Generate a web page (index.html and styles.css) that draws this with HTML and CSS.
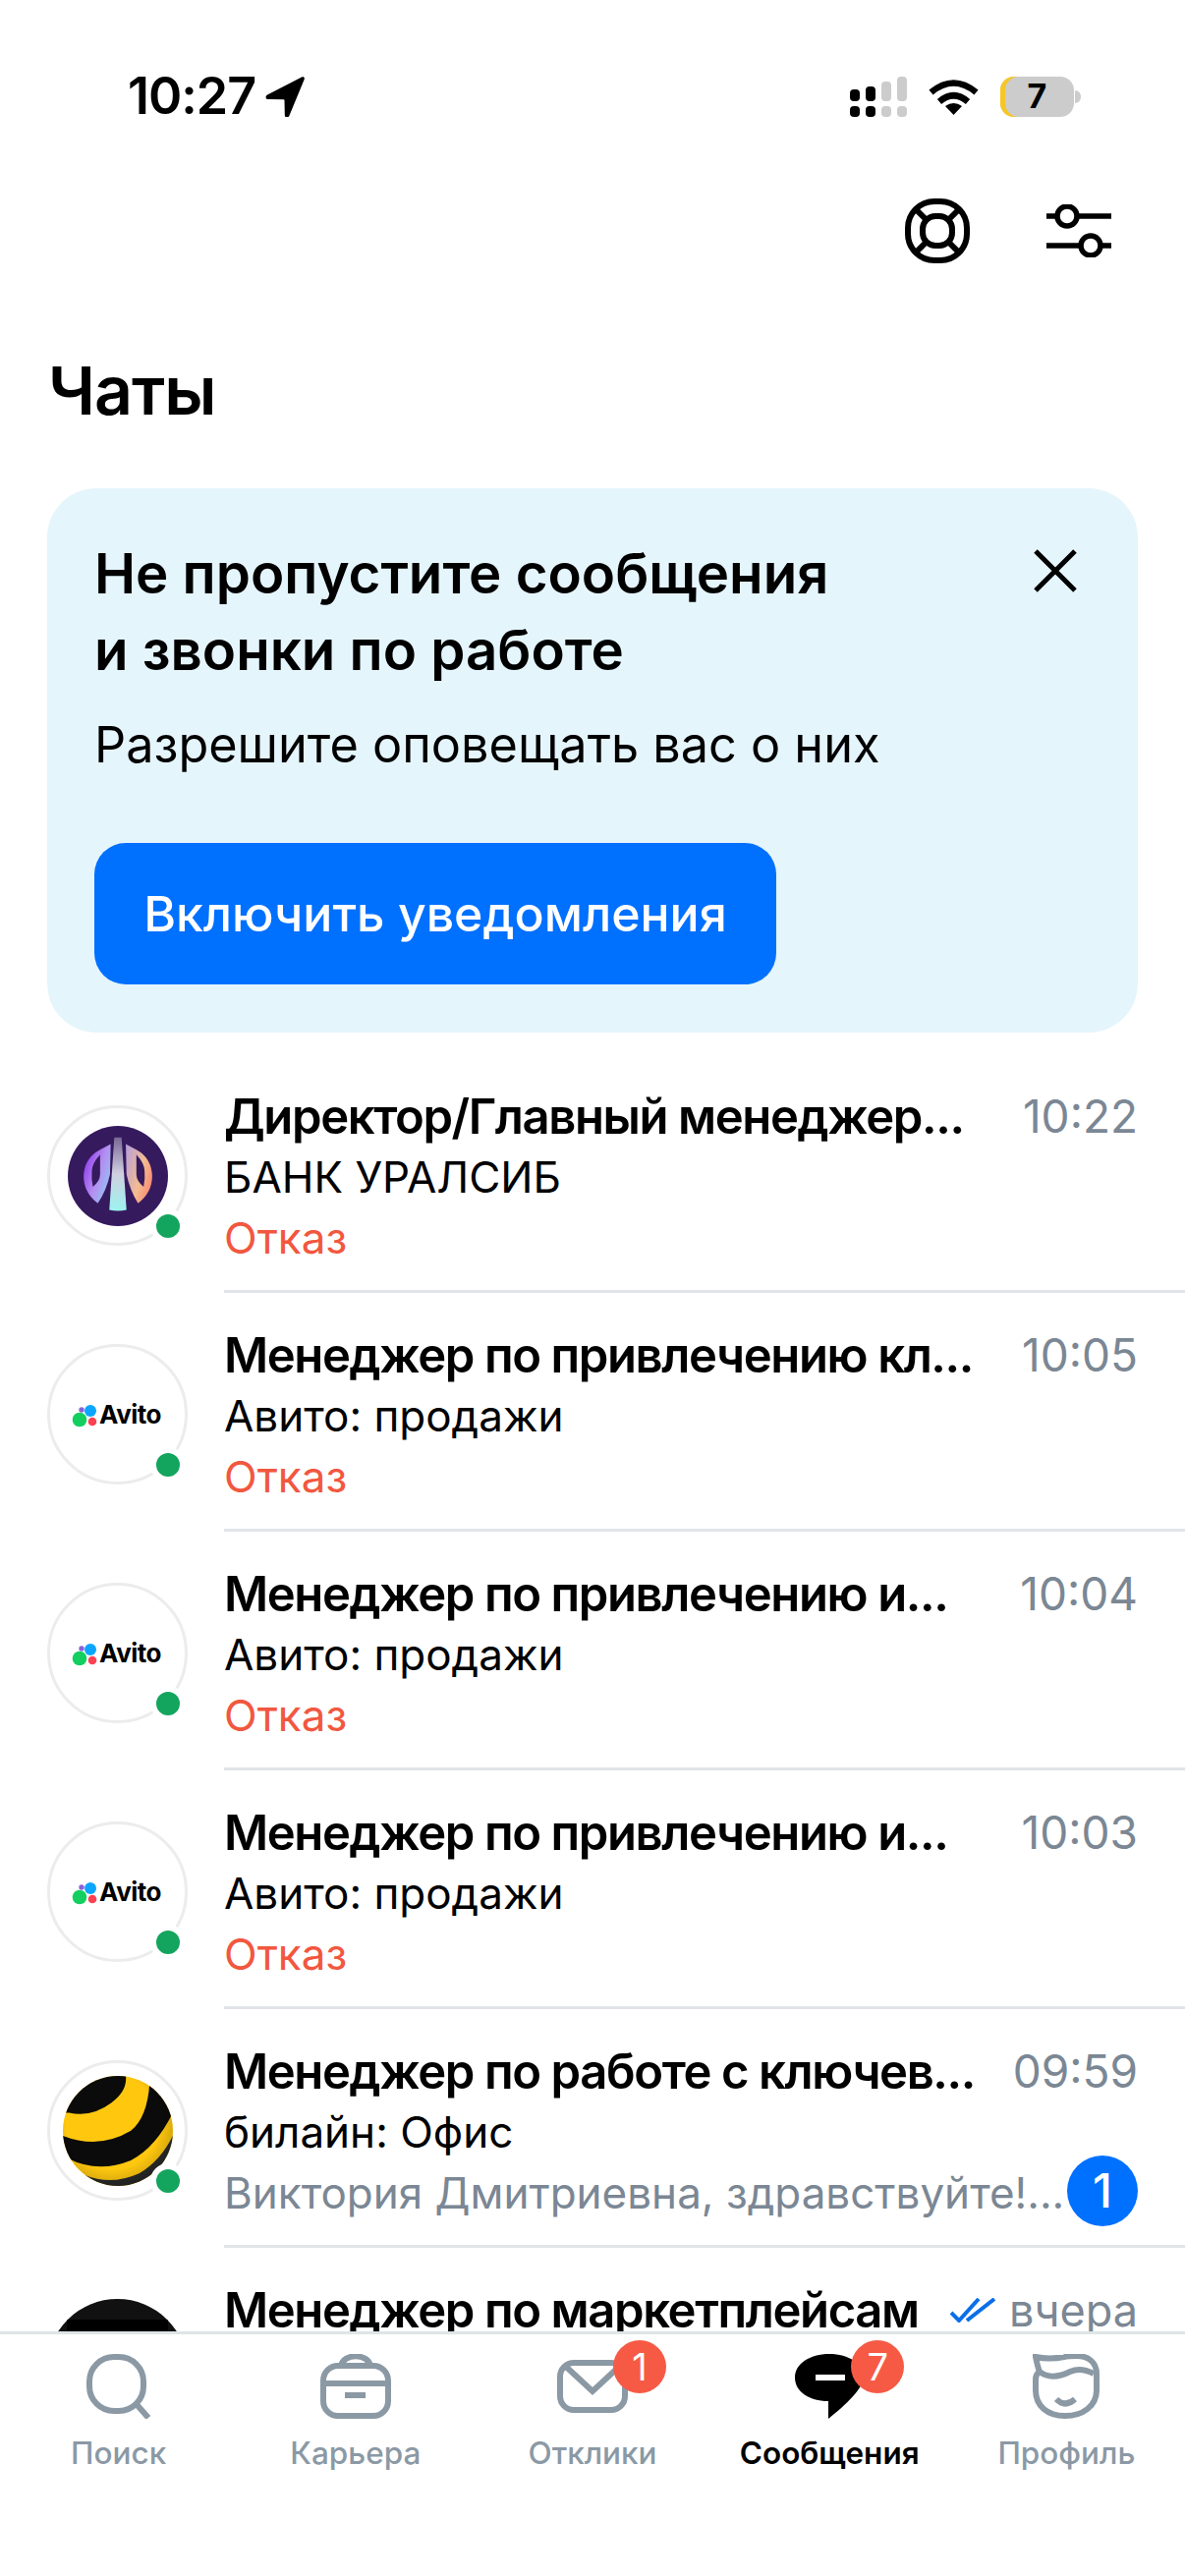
FILE: index.html
```html
<!DOCTYPE html>
<html lang="ru">
<head>
<meta charset="utf-8">
<title>Чаты</title>
<link rel="stylesheet" href="styles.css">
</head>
<body>
<div class="screen">
  <header class="status">
    <div class="status-left">
      <span class="clock">10:27</span>
      <svg class="arrow" viewBox="0 0 40 41"><path d="M37 .6 2.600 18.200C-.6 19.800.2 23 3 23l15.600.2c.6 0 .9.3.9.9l.3 14.900c0 3 3.200 3.400 4.500.9L39.500 3.200C40.500 1 39.200-.4 37 .6Z"/></svg>
    </div>
    <div class="status-right">
      <svg class="signal" viewBox="0 0 58 41">
        <g class="sig-on"><rect x="0" y="13" width="10" height="12" rx="4"/><rect x="16" y="10" width="10" height="15" rx="4"/><rect x="0" y="30" width="10" height="11" rx="4"/><rect x="16" y="30" width="10" height="11" rx="4"/></g>
        <g class="sig-off"><rect x="32" y="5" width="10" height="20" rx="4"/><rect x="48" y="0" width="10" height="25" rx="4"/><rect x="32" y="30" width="10" height="11" rx="4"/><rect x="48" y="30" width="10" height="11" rx="4"/></g>
      </svg>
      <svg class="wifi" viewBox="0 0 51 37"><path class="wifi-arc" d="M2.500 14Q25.500-5 48.500 14"/><path class="wifi-arc" d="M11 23.500Q25.500 11 40 23.500"/><path d="M17 28Q25.500 22 34 28L25.500 37Z"/></svg>
      <div class="battery"><span class="battery-num">7</span></div>
    </div>
  </header>

  <div class="actions">
    <svg class="act-help" viewBox="0 0 66 66"><rect x="3" y="3" width="60" height="60" rx="27"/><rect x="18" y="18" width="30" height="30" rx="13"/><path d="M12 12 22 22M54 12 44 22M12 54 22 44M54 54 44 44"/></svg>
    <svg class="act-filter" viewBox="0 0 66 54"><path d="M0 12H10M32 12H66M0 42H34M56 42H66"/><circle cx="21" cy="12" r="10"/><circle cx="45" cy="42" r="10"/></svg>
  </div>

  <h1 class="page-title">Чаты</h1>

  <section class="promo">
    <svg class="promo-close" viewBox="0 0 46 46"><path d="M3 3 43 43M43 3 3 43"/></svg>
    <h2 class="promo-title">Не пропустите сообщения<br>и звонки по работе</h2>
    <p class="promo-text">Разрешите оповещать вас о них</p>
    <button class="promo-btn">Включить уведомления</button>
  </section>

  <main class="list">
    <article class="row">
      <div class="avatar">
        <svg class="logo-bank" viewBox="208 198 304 304">
          <defs>
            <linearGradient id="ua" x1="0" y1=".2" x2="1" y2=".9"><stop offset="0" stop-color="#8e35ee"/><stop offset=".5" stop-color="#b48df0"/><stop offset="1" stop-color="#8ccff5"/></linearGradient>
            <linearGradient id="ub" x1="0" y1="0" x2="0" y2="1"><stop offset="0" stop-color="#7a6896"/><stop offset=".5" stop-color="#d0d0e0"/><stop offset="1" stop-color="#9cf4f0"/></linearGradient>
            <linearGradient id="uc" x1="0" y1=".1" x2="1" y2=".7"><stop offset="0" stop-color="#b8a0d8"/><stop offset=".6" stop-color="#f3bc92"/><stop offset="1" stop-color="#f88a70"/></linearGradient>
          </defs>
          <circle cx="360" cy="350" r="152" fill="#361a5e"/>
          <path fill="url(#ub)" d="M349 233H371L386 453Q360 458 334 453Z"/>
          <path fill="url(#ua)" fill-rule="evenodd" d="M338 253 336 345Q325 395 299 433Q256 400 256 350Q258 295 306 270ZM306 285Q281 312 281 335Q279 360 284 383Q306 365 306 345Z"/>
          <path fill="url(#uc)" fill-rule="evenodd" d="M384 253 386 345Q397 395 421 433Q464 400 464 350Q462 295 416 270ZM416 285Q441 312 441 335Q443 360 438 383Q416 365 416 345Z"/>
        </svg>
        <span class="online"></span>
      </div>
      <div class="body">
        <div class="line"><span class="name">Директор/Главный менеджер...</span><span class="time">10:22</span></div>
        <div class="company">БАНК УРАЛСИБ</div>
        <div class="state">Отказ</div>
      </div>
    </article>

    <article class="row">
      <div class="avatar">
        <div class="logo-avito"><svg class="avito-dots" viewBox="0 0 27 26"><circle cx="8" cy="18" r="7.300"/><circle class="d-blue" cx="19" cy="9" r="6"/><circle class="d-red" cx="21" cy="20" r="4.300"/><circle class="d-purple" cx="10" cy="8" r="2.700"/></svg><span class="avito-text">Avito</span></div>
        <span class="online"></span>
      </div>
      <div class="body">
        <div class="line"><span class="name">Менеджер по привлечению кл...</span><span class="time">10:05</span></div>
        <div class="company">Авито: продажи</div>
        <div class="state">Отказ</div>
      </div>
    </article>

    <article class="row">
      <div class="avatar">
        <div class="logo-avito"><svg class="avito-dots" viewBox="0 0 27 26"><circle cx="8" cy="18" r="7.300"/><circle class="d-blue" cx="19" cy="9" r="6"/><circle class="d-red" cx="21" cy="20" r="4.300"/><circle class="d-purple" cx="10" cy="8" r="2.700"/></svg><span class="avito-text">Avito</span></div>
        <span class="online"></span>
      </div>
      <div class="body">
        <div class="line"><span class="name">Менеджер по привлечению и...</span><span class="time">10:04</span></div>
        <div class="company">Авито: продажи</div>
        <div class="state">Отказ</div>
      </div>
    </article>

    <article class="row">
      <div class="avatar">
        <div class="logo-avito"><svg class="avito-dots" viewBox="0 0 27 26"><circle cx="8" cy="18" r="7.300"/><circle class="d-blue" cx="19" cy="9" r="6"/><circle class="d-red" cx="21" cy="20" r="4.300"/><circle class="d-purple" cx="10" cy="8" r="2.700"/></svg><span class="avito-text">Avito</span></div>
        <span class="online"></span>
      </div>
      <div class="body">
        <div class="line"><span class="name">Менеджер по привлечению и...</span><span class="time">10:03</span></div>
        <div class="company">Авито: продажи</div>
        <div class="state">Отказ</div>
      </div>
    </article>

    <article class="row">
      <div class="avatar">
        <svg class="logo-bee" viewBox="193 213 335 335">
          <defs>
            <clipPath id="ball"><circle cx="360.500" cy="380.500" r="167.500"/></clipPath>
            <radialGradient id="shade" cx=".45" cy=".42" r=".6"><stop offset=".7" stop-color="#000" stop-opacity="0"/><stop offset="1" stop-color="#000" stop-opacity=".2"/></radialGradient>
          </defs>
          <g clip-path="url(#ball)">
            <rect x="193" y="213" width="335" height="335" fill="#ffc80f"/>
            <path fill="#0b0b0b" d="M185 325V200H385V222Q385 262 340 295Q280 340 212 325Z"/>
            <path fill="#0b0b0b" d="M185 392Q300 440 400 380Q450 340 457 235L535 310Q480 430 400 470Q300 510 210 465L185 420Z"/>
            <path fill="#2a2a2a" d="M260 515Q340 548 425 510Q495 470 535 380V560H260Z"/>
            <circle cx="360.500" cy="380.500" r="167.500" fill="url(#shade)"/>
          </g>
        </svg>
        <span class="online"></span>
      </div>
      <div class="body">
        <div class="line"><span class="name">Менеджер по работе с ключев...</span><span class="time">09:59</span></div>
        <div class="company">билайн: Офис</div>
        <div class="line"><span class="preview">Виктория Дмитриевна, здравствуйте!...</span><span class="count">1</span></div>
      </div>
    </article>

    <article class="row">
      <div class="avatar avatar-black"><span class="black-square"></span></div>
      <div class="body">
        <div class="line"><span class="name">Менеджер по маркетплейсам</span><span class="meta"><svg class="ticks" viewBox="0 0 46 25"><path d="M1 15 9 23 29 1M17 23 45 1"/></svg><span class="time time-word">вчера</span></span></div>
      </div>
    </article>
  </main>

  <nav class="tabs">
    <a class="tab">
      <span class="tab-icon"><svg class="ico ico-search" viewBox="0 0 66 66"><rect x="3" y="3" width="55" height="55" rx="25"/><path d="M49 49 63 65"/></svg></span>
      <span class="tab-label">Поиск</span>
    </a>
    <a class="tab">
      <span class="tab-icon"><svg class="ico ico-case" viewBox="0 0 72 66"><path d="M21 12C24-1 48-1 51 12"/><rect x="3" y="12" width="66" height="51" rx="15"/><path d="M3 30H69"/><path d="M25 42H46"/></svg></span>
      <span class="tab-label">Карьера</span>
    </a>
    <a class="tab">
      <span class="tab-icon"><svg class="ico ico-mail" viewBox="0 0 72 66"><rect x="3" y="9" width="66" height="48" rx="14"/><path d="M8 12 36 38 64 12"/></svg><span class="tab-badge">1</span></span>
      <span class="tab-label">Отклики</span>
    </a>
    <a class="tab tab-active">
      <span class="tab-icon"><svg class="ico-chat" viewBox="0 0 70 66"><path d="M35 0C55 0 70 10 70 24 70 34 52 52 34 66L34 48C14 48 0 38 0 24 0 10 15 0 35 0Z"/><rect class="chat-dash" x="21" y="21" width="30" height="6"/></svg><span class="tab-badge">7</span></span>
      <span class="tab-label">Сообщения</span>
    </a>
    <a class="tab">
      <span class="tab-icon"><svg class="ico ico-profile" viewBox="0 0 68 66"><path d="M3 3C12 5 22 5 32 3 36 2 40 2 45 2 57 2 65 9 65 20V37C65 53 51 63 33 63 15 63 3 53 3 37V26C3 22 4 20 7 18 5 13 4 8 3 3Z"/><path d="M7 18C16 25 26 24 38 18 45 15 54 16 62 20"/><path d="M24 46Q33 55 43 46"/></svg></span>
      <span class="tab-label">Профиль</span>
    </a>
  </nav>
</div>
</body>
</html>
```
FILE: styles.css
```css
* { box-sizing: border-box; }
html, body { margin: 0; padding: 0; background: #fff; }
body { font-family: "Inter", "Liberation Sans", sans-serif; color: #000; }
.screen { width: 1206px; height: 2622px; display: flex; flex-direction: column; overflow: hidden; background: #fff; }

.status { height: 196px; flex: none; display: flex; justify-content: space-between; align-items: center; padding: 0 106px 0 130px; }
.status-left, .status-right { display: flex; align-items: center; }
.clock { font-size: 52px; font-weight: 600; line-height: 52px; letter-spacing: -1px; }
.arrow { width: 40px; height: 41px; margin-left: 10px; fill: #000; }
.signal { width: 58px; height: 41px; }
.sig-on { fill: #000; }
.sig-off { fill: #ccc; }
.wifi { width: 51px; height: 37px; margin-left: 22px; fill: #000; }
.wifi-arc { fill: none; stroke: #000; stroke-width: 6.500; }
.battery { position: relative; width: 75px; height: 41px; margin-left: 22px; margin-right: 7px; border-radius: 14px; background: #ccc; display: flex; align-items: center; justify-content: center; box-shadow: inset 5px 0 0 #f6c624; }
.battery::after { content: ""; position: absolute; right: -7px; top: 14px; width: 6px; height: 13px; border-radius: 0 6px 6px 0; background: #ccc; }
.battery-num { font-size: 34px; font-weight: 700; line-height: 1; }

.actions { height: 78px; flex: none; display: flex; justify-content: flex-end; align-items: center; gap: 78px; padding-right: 75px; }
.act-help { width: 66px; height: 66px; fill: none; stroke: #000; stroke-width: 6; }
.act-filter { width: 66px; height: 54px; fill: none; stroke: #000; stroke-width: 5.500; }

.page-title { margin: 83px 0 0 49px; font-size: 68px; font-weight: 600; line-height: 80px; letter-spacing: -1px; }

.promo { position: relative; margin: 60px 48px 0; padding: 48px 48px 49px; background: #e5f5fc; border-radius: 50px; }
.promo-close { position: absolute; top: 61px; right: 61px; width: 46px; height: 46px; fill: none; stroke: #000; stroke-width: 5; }
.promo-title { margin: 0; font-size: 56.400px; font-weight: 600; line-height: 78px; }
.promo-text { margin: 26px 0 0; font-size: 50.400px; line-height: 62px; }
.promo-btn { display: block; margin-top: 69px; width: 694px; height: 144px; border: 0; border-radius: 32px; background: #0070ff; color: #fff; font: 500 50px "Inter", "Liberation Sans", sans-serif; }

.list { flex: 1; min-height: 0; overflow: hidden; margin-top: 22px; }
.row { display: flex; height: 243px; }
.avatar { position: relative; flex: none; width: 143px; height: 143px; margin: 52px 37px 0 48px; border: 3px solid #ececec; border-radius: 50%; display: flex; align-items: center; justify-content: center; }
.online { position: absolute; left: 102px; top: 102px; width: 36px; height: 36px; border-radius: 50%; background: #13a55e; border: 6px solid #fff; }
.logo-bank { width: 102px; height: 102px; }
.logo-bee { width: 112px; height: 112px; }
.logo-avito { display: flex; align-items: center; margin-left: -2px; }
.avito-dots { width: 27px; height: 26px; fill: #12cf5f; }
.d-blue { fill: #0aa5ff; }
.d-red { fill: #ff4053; }
.d-purple { fill: #8a62d8; }
.avito-text { font-size: 26px; font-weight: 700; letter-spacing: -0.5px; line-height: 26px; margin-left: 1px; }
.avatar-black { border: 0; background: #111; align-items: flex-start; overflow: hidden; }
.black-square { width: 103px; height: 103px; margin-top: 21px; background: #000; }

.body { flex: 1; min-width: 0; padding: 32px 48px 0 0; border-bottom: 3px solid #e1e4e8; }
.line { display: flex; justify-content: space-between; align-items: center; height: 62px; white-space: nowrap; }
.name { font-size: 49px; font-weight: 600; letter-spacing: -1.400px; }
.time { font-size: 46px; color: #7b8794; }
.time-word { font-size: 45px; }
.meta { display: flex; align-items: center; gap: 14px; }
.ticks { width: 46px; height: 25px; fill: none; stroke: #0a6fe8; stroke-width: 4; }
.company { height: 62px; line-height: 62px; font-size: 44px; }
.state { height: 62px; line-height: 62px; font-size: 44px; color: #f2573f; }
.preview { font-size: 44px; color: #7b8794; }
.count { flex: none; width: 72px; height: 72px; margin-top: -4px; border-radius: 50%; background: #0070ff; color: #fff; font-size: 48px; font-weight: 500; line-height: 72px; text-align: center; }

.tabs { flex: none; height: 249px; display: grid; grid-template-columns: repeat(5, 1fr); border-top: 3px solid #dfe5e6; padding-top: 20px; background: #fff; }
.tab { display: flex; flex-direction: column; align-items: center; color: #8b99a5; }
.tab-icon { position: relative; display: block; height: 66px; }
.ico, .ico-chat { display: block; height: 66px; }
.ico { fill: none; stroke: #8b99a5; stroke-width: 6; }
.ico-search { width: 66px; }
.ico-case, .ico-mail { width: 72px; }
.ico-profile { width: 68px; }
.ico-chat { width: 70px; fill: #000; }
.chat-dash { fill: #fff; }
.tab-badge { position: absolute; left: 57px; top: -14px; width: 54px; height: 54px; border-radius: 50%; background: #f65a45; color: #fff; font-size: 38px; line-height: 54px; text-align: center; }
.tab-label { margin-top: 15px; font-size: 31.500px; font-weight: 500; line-height: 40px; white-space: nowrap; }
.tab-active { color: #000; }
.tab-active .tab-label { font-weight: 600; }
```
